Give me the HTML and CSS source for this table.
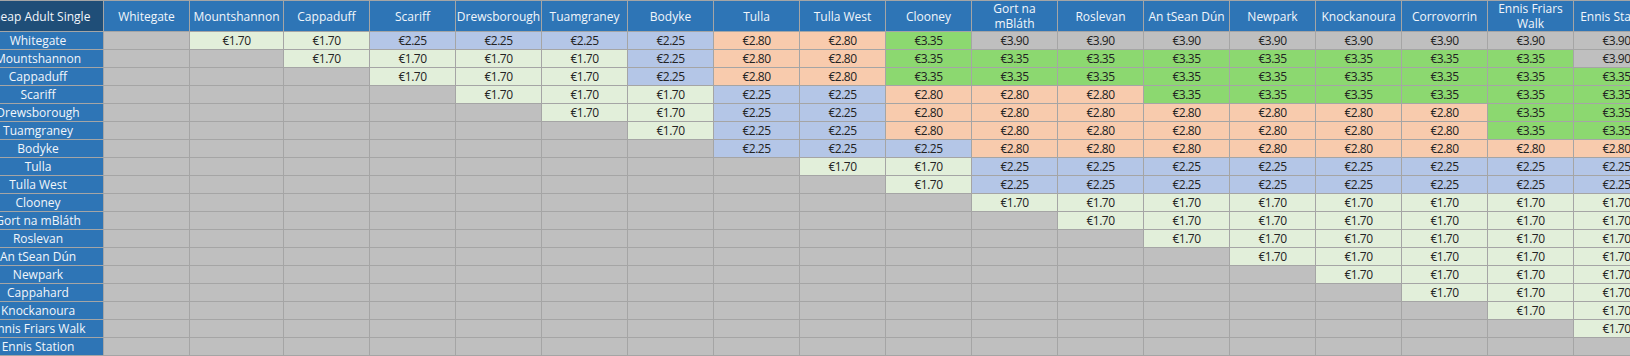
FILE: index.html
```html
<!DOCTYPE html>
<html lang="en">
<head>
<meta charset="utf-8">
<title>Cheap Adult Single</title>
<link rel="stylesheet" href="styles.css">
</head>
<body>
<div class="sheet">
  <div class="corner">Cheap Adult Single</div>
  <div class="hd">Whitegate</div><div class="hd">Mountshannon</div><div class="hd">Cappaduff</div><div class="hd">Scariff</div><div class="hd">Drewsborough</div><div class="hd">Tuamgraney</div><div class="hd">Bodyke</div><div class="hd">Tulla</div><div class="hd">Tulla West</div><div class="hd">Clooney</div><div class="hd">Gort na mBláth</div><div class="hd">Roslevan</div><div class="hd">An tSean Dún</div><div class="hd">Newpark</div><div class="hd">Knockanoura</div><div class="hd">Corrovorrin</div><div class="hd">Ennis Friars Walk</div><div class="hd">Ennis Station</div>

  <div class="rh">Whitegate</div>
  <div class="c g"></div><div class="c l">€1.70</div><div class="c l">€1.70</div><div class="c b">€2.25</div><div class="c b">€2.25</div><div class="c b">€2.25</div><div class="c b">€2.25</div><div class="c o">€2.80</div><div class="c o">€2.80</div><div class="c n">€3.35</div><div class="c g">€3.90</div><div class="c g">€3.90</div><div class="c g">€3.90</div><div class="c g">€3.90</div><div class="c g">€3.90</div><div class="c g">€3.90</div><div class="c g">€3.90</div><div class="c g">€3.90</div>

  <div class="rh">Mountshannon</div>
  <div class="c g"></div><div class="c g"></div><div class="c l">€1.70</div><div class="c l">€1.70</div><div class="c l">€1.70</div><div class="c l">€1.70</div><div class="c b">€2.25</div><div class="c o">€2.80</div><div class="c o">€2.80</div><div class="c n">€3.35</div><div class="c n">€3.35</div><div class="c n">€3.35</div><div class="c n">€3.35</div><div class="c n">€3.35</div><div class="c n">€3.35</div><div class="c n">€3.35</div><div class="c n">€3.35</div><div class="c g">€3.90</div>

  <div class="rh">Cappaduff</div>
  <div class="c g"></div><div class="c g"></div><div class="c g"></div><div class="c l">€1.70</div><div class="c l">€1.70</div><div class="c l">€1.70</div><div class="c b">€2.25</div><div class="c o">€2.80</div><div class="c o">€2.80</div><div class="c n">€3.35</div><div class="c n">€3.35</div><div class="c n">€3.35</div><div class="c n">€3.35</div><div class="c n">€3.35</div><div class="c n">€3.35</div><div class="c n">€3.35</div><div class="c n">€3.35</div><div class="c n">€3.35</div>

  <div class="rh">Scariff</div>
  <div class="c g"></div><div class="c g"></div><div class="c g"></div><div class="c g"></div><div class="c l">€1.70</div><div class="c l">€1.70</div><div class="c l">€1.70</div><div class="c b">€2.25</div><div class="c b">€2.25</div><div class="c o">€2.80</div><div class="c o">€2.80</div><div class="c o">€2.80</div><div class="c n">€3.35</div><div class="c n">€3.35</div><div class="c n">€3.35</div><div class="c n">€3.35</div><div class="c n">€3.35</div><div class="c n">€3.35</div>

  <div class="rh">Drewsborough</div>
  <div class="c g"></div><div class="c g"></div><div class="c g"></div><div class="c g"></div><div class="c g"></div><div class="c l">€1.70</div><div class="c l">€1.70</div><div class="c b">€2.25</div><div class="c b">€2.25</div><div class="c o">€2.80</div><div class="c o">€2.80</div><div class="c o">€2.80</div><div class="c o">€2.80</div><div class="c o">€2.80</div><div class="c o">€2.80</div><div class="c o">€2.80</div><div class="c n">€3.35</div><div class="c n">€3.35</div>

  <div class="rh">Tuamgraney</div>
  <div class="c g"></div><div class="c g"></div><div class="c g"></div><div class="c g"></div><div class="c g"></div><div class="c g"></div><div class="c l">€1.70</div><div class="c b">€2.25</div><div class="c b">€2.25</div><div class="c o">€2.80</div><div class="c o">€2.80</div><div class="c o">€2.80</div><div class="c o">€2.80</div><div class="c o">€2.80</div><div class="c o">€2.80</div><div class="c o">€2.80</div><div class="c n">€3.35</div><div class="c n">€3.35</div>

  <div class="rh">Bodyke</div>
  <div class="c g"></div><div class="c g"></div><div class="c g"></div><div class="c g"></div><div class="c g"></div><div class="c g"></div><div class="c g"></div><div class="c b">€2.25</div><div class="c b">€2.25</div><div class="c b">€2.25</div><div class="c o">€2.80</div><div class="c o">€2.80</div><div class="c o">€2.80</div><div class="c o">€2.80</div><div class="c o">€2.80</div><div class="c o">€2.80</div><div class="c o">€2.80</div><div class="c o">€2.80</div>

  <div class="rh">Tulla</div>
  <div class="c g"></div><div class="c g"></div><div class="c g"></div><div class="c g"></div><div class="c g"></div><div class="c g"></div><div class="c g"></div><div class="c g"></div><div class="c l">€1.70</div><div class="c l">€1.70</div><div class="c b">€2.25</div><div class="c b">€2.25</div><div class="c b">€2.25</div><div class="c b">€2.25</div><div class="c b">€2.25</div><div class="c b">€2.25</div><div class="c b">€2.25</div><div class="c b">€2.25</div>

  <div class="rh">Tulla West</div>
  <div class="c g"></div><div class="c g"></div><div class="c g"></div><div class="c g"></div><div class="c g"></div><div class="c g"></div><div class="c g"></div><div class="c g"></div><div class="c g"></div><div class="c l">€1.70</div><div class="c b">€2.25</div><div class="c b">€2.25</div><div class="c b">€2.25</div><div class="c b">€2.25</div><div class="c b">€2.25</div><div class="c b">€2.25</div><div class="c b">€2.25</div><div class="c b">€2.25</div>

  <div class="rh">Clooney</div>
  <div class="c g"></div><div class="c g"></div><div class="c g"></div><div class="c g"></div><div class="c g"></div><div class="c g"></div><div class="c g"></div><div class="c g"></div><div class="c g"></div><div class="c g"></div><div class="c l">€1.70</div><div class="c l">€1.70</div><div class="c l">€1.70</div><div class="c l">€1.70</div><div class="c l">€1.70</div><div class="c l">€1.70</div><div class="c l">€1.70</div><div class="c l">€1.70</div>

  <div class="rh">Gort na mBláth</div>
  <div class="c g"></div><div class="c g"></div><div class="c g"></div><div class="c g"></div><div class="c g"></div><div class="c g"></div><div class="c g"></div><div class="c g"></div><div class="c g"></div><div class="c g"></div><div class="c g"></div><div class="c l">€1.70</div><div class="c l">€1.70</div><div class="c l">€1.70</div><div class="c l">€1.70</div><div class="c l">€1.70</div><div class="c l">€1.70</div><div class="c l">€1.70</div>

  <div class="rh">Roslevan</div>
  <div class="c g"></div><div class="c g"></div><div class="c g"></div><div class="c g"></div><div class="c g"></div><div class="c g"></div><div class="c g"></div><div class="c g"></div><div class="c g"></div><div class="c g"></div><div class="c g"></div><div class="c g"></div><div class="c l">€1.70</div><div class="c l">€1.70</div><div class="c l">€1.70</div><div class="c l">€1.70</div><div class="c l">€1.70</div><div class="c l">€1.70</div>

  <div class="rh">An tSean Dún</div>
  <div class="c g"></div><div class="c g"></div><div class="c g"></div><div class="c g"></div><div class="c g"></div><div class="c g"></div><div class="c g"></div><div class="c g"></div><div class="c g"></div><div class="c g"></div><div class="c g"></div><div class="c g"></div><div class="c g"></div><div class="c l">€1.70</div><div class="c l">€1.70</div><div class="c l">€1.70</div><div class="c l">€1.70</div><div class="c l">€1.70</div>

  <div class="rh">Newpark</div>
  <div class="c g"></div><div class="c g"></div><div class="c g"></div><div class="c g"></div><div class="c g"></div><div class="c g"></div><div class="c g"></div><div class="c g"></div><div class="c g"></div><div class="c g"></div><div class="c g"></div><div class="c g"></div><div class="c g"></div><div class="c g"></div><div class="c l">€1.70</div><div class="c l">€1.70</div><div class="c l">€1.70</div><div class="c l">€1.70</div>

  <div class="rh">Cappahard</div>
  <div class="c g"></div><div class="c g"></div><div class="c g"></div><div class="c g"></div><div class="c g"></div><div class="c g"></div><div class="c g"></div><div class="c g"></div><div class="c g"></div><div class="c g"></div><div class="c g"></div><div class="c g"></div><div class="c g"></div><div class="c g"></div><div class="c g"></div><div class="c l">€1.70</div><div class="c l">€1.70</div><div class="c l">€1.70</div>

  <div class="rh">Knockanoura</div>
  <div class="c g"></div><div class="c g"></div><div class="c g"></div><div class="c g"></div><div class="c g"></div><div class="c g"></div><div class="c g"></div><div class="c g"></div><div class="c g"></div><div class="c g"></div><div class="c g"></div><div class="c g"></div><div class="c g"></div><div class="c g"></div><div class="c g"></div><div class="c g"></div><div class="c l">€1.70</div><div class="c l">€1.70</div>

  <div class="rh">Ennis Friars Walk</div>
  <div class="c g"></div><div class="c g"></div><div class="c g"></div><div class="c g"></div><div class="c g"></div><div class="c g"></div><div class="c g"></div><div class="c g"></div><div class="c g"></div><div class="c g"></div><div class="c g"></div><div class="c g"></div><div class="c g"></div><div class="c g"></div><div class="c g"></div><div class="c g"></div><div class="c g"></div><div class="c l">€1.70</div>

  <div class="rh">Ennis Station</div>
  <div class="c g"></div><div class="c g"></div><div class="c g"></div><div class="c g"></div><div class="c g"></div><div class="c g"></div><div class="c g"></div><div class="c g"></div><div class="c g"></div><div class="c g"></div><div class="c g"></div><div class="c g"></div><div class="c g"></div><div class="c g"></div><div class="c g"></div><div class="c g"></div><div class="c g"></div><div class="c g"></div>
</div>
</body>
</html>
```

FILE: styles.css
```css
html, body {
  margin: 0;
  padding: 0;
  background: #ffffff;
  overflow: hidden;
}

.sheet {
  display: grid;
  grid-template-columns: 130px 85px 93px repeat(16, 85px);
  grid-template-rows: 30px;
  grid-auto-rows: 17px;
  gap: 1px;
  padding: 1px;
  margin-left: -28px;
  width: max-content;
  background: #a5a5a5;
  font-family: "Open Sans", "Noto Sans", sans-serif;
  font-size: 12px;
  line-height: 15px;
}

.corner,
.hd,
.rh,
.c {
  display: flex;
  align-items: center;
  justify-content: center;
  text-align: center;
  overflow: hidden;
}

.corner {
  background: #1f4e78;
  color: #f2f6fb;
  white-space: nowrap;
}

.hd {
  background: #2e75b6;
  color: #f2f6fb;
}

.rh {
  background: #2e75b6;
  color: #f2f6fb;
  white-space: nowrap;
}

.c {
  color: #222222;
  white-space: nowrap;
  letter-spacing: -0.5px;
}

.g { background: #bfbfbf; }
.l { background: #e2efda; }
.b { background: #b4c6e7; }
.o { background: #f8cbad; }
.n { background: #8cd870; }
```
